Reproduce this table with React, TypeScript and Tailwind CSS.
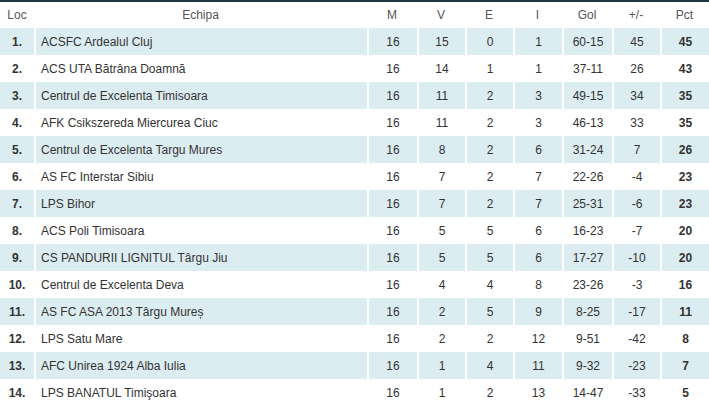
import React from "react";

const rows: [string, string, string, string, string, string, string, string, string][] = [
  ["1.", "ACSFC Ardealul Cluj", "16", "15", "0", "1", "60-15", "45", "45"],
  ["2.", "ACS UTA Bătrâna Doamnă", "16", "14", "1", "1", "37-11", "26", "43"],
  ["3.", "Centrul de Excelenta Timisoara", "16", "11", "2", "3", "49-15", "34", "35"],
  ["4.", "AFK Csikszereda Miercurea Ciuc", "16", "11", "2", "3", "46-13", "33", "35"],
  ["5.", "Centrul de Excelenta Targu Mures", "16", "8", "2", "6", "31-24", "7", "26"],
  ["6.", "AS FC Interstar Sibiu", "16", "7", "2", "7", "22-26", "-4", "23"],
  ["7.", "LPS Bihor", "16", "7", "2", "7", "25-31", "-6", "23"],
  ["8.", "ACS Poli Timisoara", "16", "5", "5", "6", "16-23", "-7", "20"],
  ["9.", "CS PANDURII LIGNITUL Târgu Jiu", "16", "5", "5", "6", "17-27", "-10", "20"],
  ["10.", "Centrul de Excelenta Deva", "16", "4", "4", "8", "23-26", "-3", "16"],
  ["11.", "AS FC ASA 2013 Târgu Mureș", "16", "2", "5", "9", "8-25", "-17", "11"],
  ["12.", "LPS Satu Mare", "16", "2", "2", "12", "9-51", "-42", "8"],
  ["13.", "AFC Unirea 1924 Alba Iulia", "16", "1", "4", "11", "9-32", "-23", "7"],
  ["14.", "LPS BANATUL Timişoara", "16", "1", "2", "13", "14-47", "-33", "5"],
];

const grid =
  "grid grid-cols-[34px_333px_50px_48px_48px_49px_50px_48px_49px]";

export default function App() {
  return (
    <div
      className="w-[709px] h-[400px] overflow-hidden bg-white border-t-2 border-[#1e3842] text-[12px] text-[#333]"
      style={{ fontFamily: '"Liberation Sans", Arial, sans-serif' }}
    >
      <div className={`${grid} h-[26px] items-center text-[#555]`}>
        <div className="text-center">Loc</div>
        <div className="text-center">Echipa</div>
        <div className="text-center">M</div>
        <div className="text-center">V</div>
        <div className="text-center">E</div>
        <div className="text-center">I</div>
        <div className="text-center">Gol</div>
        <div className="text-center">+/-</div>
        <div className="text-center">Pct</div>
      </div>
      {rows.map((r, i) => (
        <div
          key={i}
          className={`${grid} h-[27px] ${i % 2 === 0 ? "bg-[#dcedf1]" : "bg-white"}`}
        >
          <div className="flex items-center justify-center font-bold">{r[0]}</div>
          <div className="flex items-center border-l-2 border-white pl-[5px]">{r[1]}</div>
          {r.slice(2).map((c, j) => (
            <div
              key={j}
              className={`flex items-center justify-center border-l-2 border-white ${j === 6 ? "font-bold" : ""}`}
            >
              {c}
            </div>
          ))}
        </div>
      ))}
    </div>
  );
}
